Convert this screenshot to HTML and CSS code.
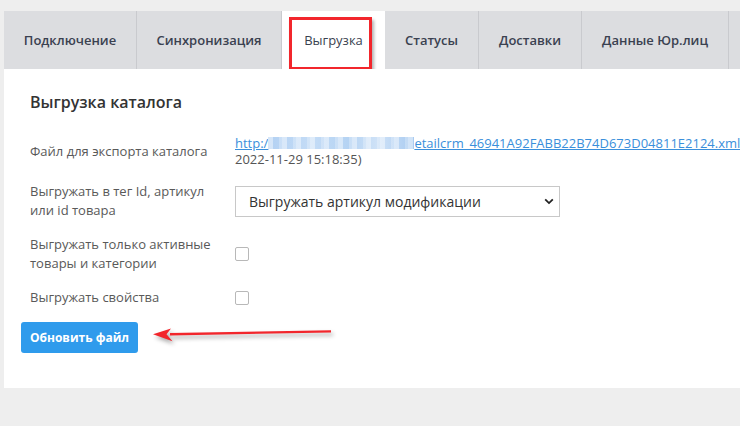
FILE: index.html
```html
<!DOCTYPE html>
<html lang="ru">

<head>
  <meta charset="UTF-8">
  <meta name="viewport" content="width=device-width, initial-scale=1.0">
  <title>Выгрузка</title>
  <link rel="stylesheet" href="styles.css">
</head>

<body>
  <div class="page">
    <ul class="tabs">
      <li class="t-conn">Подключение</li>
      <li class="t-sync">Синхронизация</li>
      <li class="t-export active">Выгрузка</li>
      <li class="t-status">Статусы</li>
      <li class="t-delivery">Доставки</li>
      <li class="t-legal">Данные Юр.лиц</li>
      <li class="t-more"></li>
    </ul>
    <div class="panel">
      <h2 class="title">Выгрузка каталога</h2>
      <div class="form">
        <div class="row">
          <div class="label">Файл для экспорта каталога</div>
          <div class="value">
            <a href="#" class="link">http:/<span class="blur"></span>etailcrm_46941A92FABB22B74D673D04811E2124.xml</a>
            <div class="date">2022-11-29 15:18:35)</div>
          </div>
        </div>
        <div class="row">
          <div class="label">Выгружать в тег Id, артикул<br>или id товара</div>
          <div class="value">
            <div class="select-wrap">
              <select class="select">
                <option>Выгружать артикул модификации</option>
              </select>
              <svg class="chevron" width="10" height="7" viewBox="0 0 10 7">
                <path d="M1.2 1.3 L5 5.1 L8.8 1.3" fill="none" stroke="#222" stroke-width="1.8" />
              </svg>
            </div>
          </div>
        </div>
        <div class="row">
          <div class="label">Выгружать только активные<br>товары и категории</div>
          <div class="value"><input type="checkbox" class="check"></div>
        </div>
        <div class="row">
          <div class="label">Выгружать свойства</div>
          <div class="value"><input type="checkbox" class="check"></div>
        </div>
      </div>
      <button class="btn">Обновить файл</button>

      <!-- стрелка-пометка на скриншоте -->
      <svg class="arrow" width="190" height="30" viewBox="150 320 190 30">
        <path d="M331 330.2 L170 333 L170 335.6 L331 332.4 Z" fill="#f2262c" />
        <path d="M153 334.3 L171 328.6 L166.5 334.3 L172.5 341.2 Z" fill="#f2262c" />
      </svg>
    </div>
  </div>
</body>

</html>
```

FILE: styles.css
```css
* {
  margin: 0;
  padding: 0;
  list-style: none;
  box-sizing: border-box;
}

body {
  background: #eeeeee;
  font-family: "Open Sans", "Liberation Sans", sans-serif;
  color: #555;
}

.page {
  width: 740px;
  height: 426px;
  padding: 11px 0 0 4px;
  overflow: hidden;
}

.tabs {
  display: flex;
  height: 58px;
  background: #dcdde0;
  white-space: nowrap;
}

.tabs li {
  flex: none;
  display: flex;
  align-items: center;
  justify-content: center;
  font-size: 13px;
  font-weight: 600;
  color: #3a4150;
  border-right: 1px solid #c9cace;
}

.tabs .t-conn { width: 133px; }
.tabs .t-sync { width: 145px; }
.tabs .t-export { width: 103px; }
.tabs .t-status { width: 94px; }
.tabs .t-delivery { width: 103px; }
.tabs .t-legal { width: 147px; }
.tabs .t-more { width: 40px; }

.tabs li.active {
  position: relative;
  background: #fff;
  border-right: none;
  font-weight: 500;
}

.tabs li.active::after {
  content: "";
  position: absolute;
  top: 6px;
  left: 7px;
  right: 13px;
  bottom: -1px;
  border: 3px solid #f2262c;
  box-shadow: 2px 3px 3px rgba(0, 0, 0, 0.3);
}

.panel {
  position: relative;
  background: #fff;
  height: 319px;
  padding: 22px 0 0 26px;
}

.title {
  font-size: 16px;
  line-height: 22px;
  font-weight: 600;
  color: #333;
  margin-bottom: 22px;
}

.form {
  display: flex;
  flex-direction: column;
  gap: 15px;
}

.row {
  display: flex;
  align-items: center;
}

.label {
  flex: none;
  width: 205px;
  font-size: 13px;
  line-height: 19px;
  color: #595959;
}

.value {
  font-size: 13px;
  line-height: 16px;
}

.link {
  color: #3a8fdb;
  white-space: nowrap;
  text-decoration: underline;
}

.blur {
  display: inline-block;
  width: 146px;
  height: 12px;
  vertical-align: -1px;
  background:
    repeating-linear-gradient(90deg, rgba(255, 255, 255, 0.45) 0 5px, rgba(255, 255, 255, 0) 5px 11px, rgba(255, 255, 255, 0.25) 11px 14px),
    linear-gradient(90deg, #b3d1f3, #c4dcf6 30%, #b5d3f3 55%, #cfe2f7 75%, #a9cbf1);
}

.date {
  color: #555;
}

.select-wrap {
  position: relative;
  width: 325px;
}

.select {
  appearance: none;
  width: 325px;
  height: 31px;
  border: 1px solid #c8c8c8;
  background: #fff;
  padding-left: 13px;
  font-family: "Open Sans", "Liberation Sans", sans-serif;
  font-size: 14px;
  color: #333;
}

.chevron {
  position: absolute;
  right: 6px;
  top: 12px;
}

.check {
  appearance: none;
  display: block;
  width: 14px;
  height: 14px;
  border: 1px solid #b8b8b8;
  border-radius: 2px;
  background: #fff;
}

.btn {
  display: block;
  margin: 15px 0 0 -9px;
  width: 117px;
  height: 31px;
  border: none;
  border-radius: 3px;
  background: #2f9bec;
  color: #fff;
  font-family: "Open Sans", "Liberation Sans", sans-serif;
  font-size: 12px;
  font-weight: 700;
}

.arrow {
  position: absolute;
  left: 146px;
  top: 251px;
  filter: drop-shadow(2px 3px 2px rgba(0, 0, 0, 0.35));
}
```
